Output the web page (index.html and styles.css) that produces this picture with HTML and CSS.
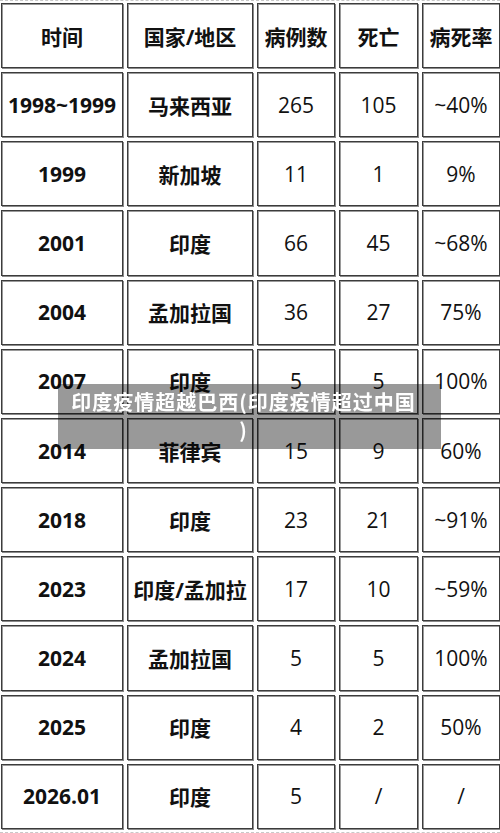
FILE: index.html
```html
<!DOCTYPE html>
<html lang="zh-CN">
<head>
<meta charset="utf-8">
<title>印度疫情超越巴西</title>
<link rel="stylesheet" href="styles.css">
</head>
<body>
<div class="figure">
  <div class="grid" role="table">
    <div class="cell head">时间</div><div class="cell head">国家/地区</div><div class="cell head">病例数</div><div class="cell head">死亡</div><div class="cell head">病死率</div>
    <div class="cell b">1998~1999</div><div class="cell b">马来西亚</div><div class="cell">265</div><div class="cell">105</div><div class="cell">~40%</div>
    <div class="cell b">1999</div><div class="cell b">新加坡</div><div class="cell">11</div><div class="cell">1</div><div class="cell">9%</div>
    <div class="cell b">2001</div><div class="cell b">印度</div><div class="cell">66</div><div class="cell">45</div><div class="cell">~68%</div>
    <div class="cell b">2004</div><div class="cell b">孟加拉国</div><div class="cell">36</div><div class="cell">27</div><div class="cell">75%</div>
    <div class="cell b">2007</div><div class="cell b">印度</div><div class="cell">5</div><div class="cell">5</div><div class="cell">100%</div>
    <div class="cell b">2014</div><div class="cell b">菲律宾</div><div class="cell">15</div><div class="cell">9</div><div class="cell">60%</div>
    <div class="cell b">2018</div><div class="cell b">印度</div><div class="cell">23</div><div class="cell">21</div><div class="cell">~91%</div>
    <div class="cell b">2023</div><div class="cell b">印度/孟加拉</div><div class="cell">17</div><div class="cell">10</div><div class="cell">~59%</div>
    <div class="cell b">2024</div><div class="cell b">孟加拉国</div><div class="cell">5</div><div class="cell">5</div><div class="cell">100%</div>
    <div class="cell b">2025</div><div class="cell b">印度</div><div class="cell">4</div><div class="cell">2</div><div class="cell">50%</div>
    <div class="cell b">2026.01</div><div class="cell b">印度</div><div class="cell">5</div><div class="cell">/</div><div class="cell">/</div>
  </div>
</div>
<div class="caption">印度疫情超越巴西(印度疫情超过中国)</div>
</body>
</html>
```

FILE: styles.css
```css
html, body {
  margin: 0;
  padding: 0;
  background: #ffffff;
  overflow: hidden;
}

.figure {
  width: 500px;
  height: 833px;
  box-sizing: border-box;
  border-top: 1px dashed #c8c8c8;
  border-bottom: 1px dashed #c8c8c8;
  padding: 2px 0 0 1px;
}

.grid {
  display: grid;
  grid-template-columns: 122px 126px 78px 79px 78px;
  grid-auto-rows: 65.17px;
  column-gap: 4px;
  row-gap: 4px;
}

.cell {
  display: flex;
  align-items: center;
  justify-content: center;
  box-sizing: border-box;
  border: 1px solid #3c3c3c;
  box-shadow: inset 1px 1px 0 #9a9a9a, 1px 1px 0 #8a8a8a;
  font-family: "Open Sans", "Noto Sans CJK SC", sans-serif;
  font-size: 21px;
  color: #111111;
  white-space: nowrap;
}

.head,
.b {
  font-weight: 700;
}

.caption {
  position: fixed;
  left: 58px;
  top: 384px;
  width: 383px;
  height: 65px;
  box-sizing: border-box;
  padding: 4px 22px 4px 10px;
  background: rgba(0, 0, 0, 0.4);
  color: #ffffff;
  font-family: "Noto Sans CJK SC", sans-serif;
  font-weight: 700;
  font-size: 20px;
  line-height: 28px;
  letter-spacing: 1px;
  text-align: center;
  line-break: anywhere;
}
```
